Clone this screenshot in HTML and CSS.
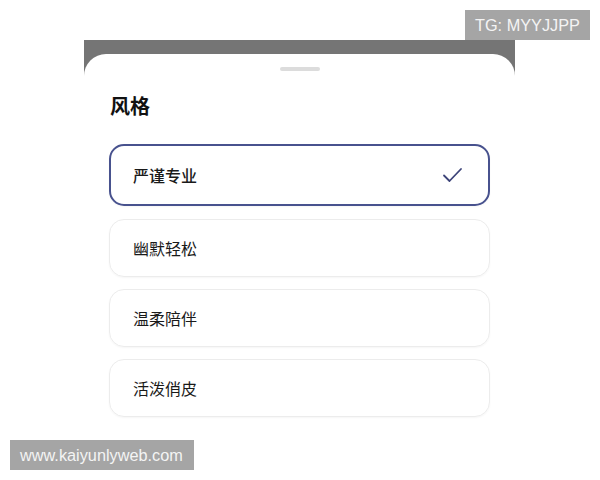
FILE: index.html
```html
<!DOCTYPE html>
<html>

<head>
    <title>风格</title>
    <link rel="stylesheet" href="styles.css">
</head>

<body>
    <div class="tag tag-top">TG: MYYJJPP</div>
    <div class="stage">
        <div class="backdrop">
            <div class="sheet">
                <div class="handle"></div>
                <h2 class="title">风格</h2>
                <div class="options">
                    <div class="option selected">
                        <span>严谨专业</span>
                        <svg class="check" width="22" height="18" viewBox="0 0 22 18">
                            <path d="M2 9.5 L7.5 15 L19 3" fill="none" stroke="#3d4479" stroke-width="1.8" stroke-linecap="round" stroke-linejoin="round"/>
                        </svg>
                    </div>
                    <div class="option"><span>幽默轻松</span></div>
                    <div class="option"><span>温柔陪伴</span></div>
                    <div class="option"><span>活泼俏皮</span></div>
                </div>
            </div>
        </div>
    </div>
    <div class="tag tag-bottom">www.kaiyunlyweb.com</div>
</body>

</html>
```

FILE: styles.css
```css
body {
    margin: 0;
    background-color: white;
    font-family: "Noto Sans CJK SC", "Noto Sans", sans-serif;
    color: #1a1a1a;
}

.stage {
    padding-top: 40px;
    margin-left: 84px;
    width: 431px;
}

.backdrop {
    background-color: #757575;
    padding-top: 14px;
}

.sheet {
    background-color: white;
    border-radius: 22px 22px 0 0;
    padding: 13px 25px 40px 25px;
    height: 380px;
}

.handle {
    width: 40px;
    height: 4px;
    border-radius: 2px;
    background-color: #dcdcdc;
    margin: 0 auto;
}

.title {
    margin: 20px 0 0 1px;
    font-size: 20px;
    font-weight: 700;
    line-height: 30px;
    color: #111;
}

.options {
    display: flex;
    flex-direction: column;
    gap: 12px;
    margin-top: 23px;
}

.option {
    display: flex;
    align-items: center;
    justify-content: space-between;
    height: 58px;
    box-sizing: border-box;
    border: 1px solid #ececec;
    border-radius: 15px;
    padding: 0 24px 0 23px;
    font-size: 16px;
    box-shadow: 0 1px 2px rgba(0, 0, 0, 0.04);
}

.option.selected {
    height: 62px;
    border: 2px solid #48528e;
    padding-left: 22px;
    font-weight: 500;
    margin-bottom: 1px;
}

.check {
    display: block;
}

.tag {
    position: absolute;
    background-color: #a5a5a5;
    color: #f4f4f4;
    font-family: "Liberation Sans", Arial, sans-serif;
    font-size: 16.3px;
    line-height: 30px;
    height: 30px;
    padding: 0 10px;
}

.tag-top {
    top: 10px;
    left: 465px;
    width: 105px;
}

.tag-bottom {
    top: 440px;
    left: 10px;
    width: 164px;
}
```
